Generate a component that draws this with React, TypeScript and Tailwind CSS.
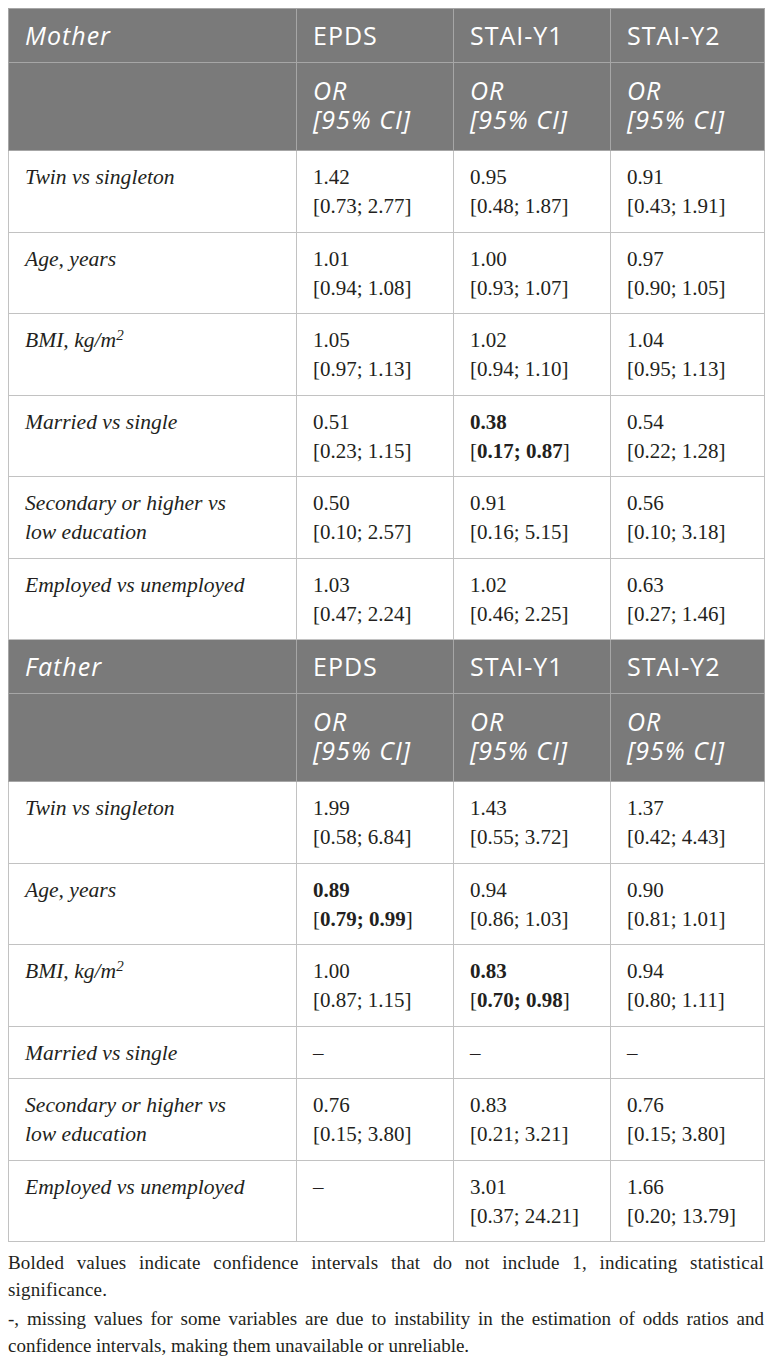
import React from 'react';

type Cell = { or: string; ci?: string; bold?: boolean };
type Row = { label: React.ReactNode; cells: Cell[] };

const bmi = (
  <>
    BMI, kg/m<sup className="text-[15px] leading-none">2</sup>
  </>
);

const motherRows: Row[] = [
  { label: 'Twin vs singleton', cells: [{ or: '1.42', ci: '0.73; 2.77' }, { or: '0.95', ci: '0.48; 1.87' }, { or: '0.91', ci: '0.43; 1.91' }] },
  { label: 'Age, years', cells: [{ or: '1.01', ci: '0.94; 1.08' }, { or: '1.00', ci: '0.93; 1.07' }, { or: '0.97', ci: '0.90; 1.05' }] },
  { label: bmi, cells: [{ or: '1.05', ci: '0.97; 1.13' }, { or: '1.02', ci: '0.94; 1.10' }, { or: '1.04', ci: '0.95; 1.13' }] },
  { label: 'Married vs single', cells: [{ or: '0.51', ci: '0.23; 1.15' }, { or: '0.38', ci: '0.17; 0.87', bold: true }, { or: '0.54', ci: '0.22; 1.28' }] },
  { label: <>Secondary or higher vs<br />low education</>, cells: [{ or: '0.50', ci: '0.10; 2.57' }, { or: '0.91', ci: '0.16; 5.15' }, { or: '0.56', ci: '0.10; 3.18' }] },
  { label: 'Employed vs unemployed', cells: [{ or: '1.03', ci: '0.47; 2.24' }, { or: '1.02', ci: '0.46; 2.25' }, { or: '0.63', ci: '0.27; 1.46' }] },
];

const fatherRows: Row[] = [
  { label: 'Twin vs singleton', cells: [{ or: '1.99', ci: '0.58; 6.84' }, { or: '1.43', ci: '0.55; 3.72' }, { or: '1.37', ci: '0.42; 4.43' }] },
  { label: 'Age, years', cells: [{ or: '0.89', ci: '0.79; 0.99', bold: true }, { or: '0.94', ci: '0.86; 1.03' }, { or: '0.90', ci: '0.81; 1.01' }] },
  { label: bmi, cells: [{ or: '1.00', ci: '0.87; 1.15' }, { or: '0.83', ci: '0.70; 0.98', bold: true }, { or: '0.94', ci: '0.80; 1.11' }] },
  { label: 'Married vs single', cells: [{ or: '–' }, { or: '–' }, { or: '–' }] },
  { label: <>Secondary or higher vs<br />low education</>, cells: [{ or: '0.76', ci: '0.15; 3.80' }, { or: '0.83', ci: '0.21; 3.21' }, { or: '0.76', ci: '0.15; 3.80' }] },
  { label: 'Employed vs unemployed', cells: [{ or: '–' }, { or: '3.01', ci: '0.37; 24.21' }, { or: '1.66', ci: '0.20; 13.79' }] },
];

// header cells: grey band, white sans text
const hd = 'border border-[#a6a6a6] bg-[#7a7a7a] text-white text-left font-normal align-top px-4';
const td = 'border border-[#c2c2c2] align-top px-4 pt-[12px] pb-[10.5px]';

function Group({ title, rows }: { title: string; rows: Row[] }) {
  return (
    <>
      <tr className="font-['Open_Sans',sans-serif] text-[25px] leading-[29px] tracking-[0.04em]">
        <th className={`${hd} italic py-[12px]`}>{title}</th>
        <th className={`${hd} py-[12px]`}>EPDS</th>
        <th className={`${hd} py-[12px]`}>STAI-Y1</th>
        <th className={`${hd} py-[12px]`}>STAI-Y2</th>
      </tr>
      <tr className="font-['Open_Sans',sans-serif] text-[25px] leading-[29px] tracking-[0.04em]">
        <th className={`${hd} pt-[13px] pb-[16px]`}></th>
        {[0, 1, 2].map((i) => (
          <th key={i} className={`${hd} italic pt-[13px] pb-[16px]`}>
            OR
            <br />
            [95% CI]
          </th>
        ))}
      </tr>
      {rows.map((r, i) => (
        <tr key={i}>
          <td className={`${td} italic text-[21.6px]`}>{r.label}</td>
          {r.cells.map((c, j) => (
            <td key={j} className={td}>
              {c.bold ? <b>{c.or}</b> : c.or}
              {c.ci && (
                <>
                  <br />[{c.bold ? <b>{c.ci}</b> : c.ci}]
                </>
              )}
            </td>
          ))}
        </tr>
      ))}
    </>
  );
}

export default function App() {
  return (
    <div className="bg-white px-2 pt-2 pb-3 font-['Liberation_Serif',serif] text-[#231f20]">
      <table className="w-full table-fixed border-collapse text-[21px] leading-[29px]">
        <colgroup>
          <col className="w-[288px]" />
          <col className="w-[157px]" />
          <col className="w-[157px]" />
          <col className="w-[154px]" />
        </colgroup>
        <tbody>
          <Group title="Mother" rows={motherRows} />
          <Group title="Father" rows={fatherRows} />
        </tbody>
      </table>
      <div className="mt-[7px] text-[19px] leading-[27px] text-justify">
        <p className="tracking-[0.2px]">
          Bolded values indicate confidence intervals that do not include 1, indicating statistical
          significance.
        </p>
        <p className="mt-[2px]">
          -, missing values for some variables are due to instability in the estimation of odds ratios and
          confidence intervals, making them unavailable or unreliable.
        </p>
      </div>
    </div>
  );
}
